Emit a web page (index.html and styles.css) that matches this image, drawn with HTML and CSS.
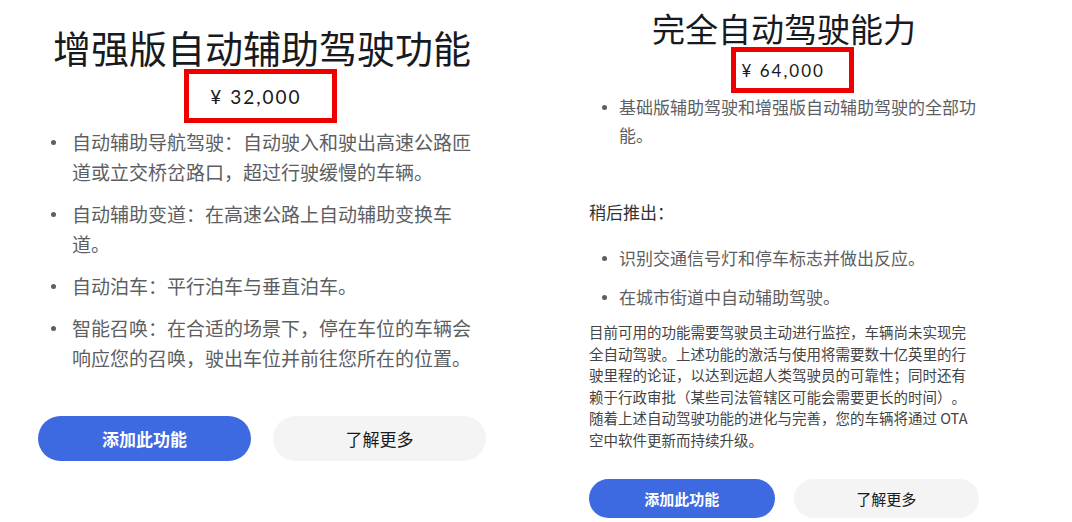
FILE: index.html
```html
<!DOCTYPE html>
<html lang="zh-CN">
<head>
    <meta charset="UTF-8">
    <meta name="viewport" content="width=device-width, initial-scale=1.0">
    <link rel="stylesheet" href="styles.css">
</head>
<body>
    <div class="panel panel-eap">
        <h2 class="panel-title">增强版自动辅助驾驶功能</h2>
        <div class="price-box"><span class="price">¥ 32,000</span></div>
        <ul class="features">
            <li>自动辅助导航驾驶：自动驶入和驶出高速公路匝道或立交桥岔路口，超过行驶缓慢的车辆。</li>
            <li>自动辅助变道：在高速公路上自动辅助变换车道。</li>
            <li>自动泊车：平行泊车与垂直泊车。</li>
            <li>智能召唤：在合适的场景下，停在车位的车辆会响应您的召唤，驶出车位并前往您所在的位置。</li>
        </ul>
        <div class="actions">
            <button class="btn btn-primary">添加此功能</button>
            <button class="btn btn-secondary">了解更多</button>
        </div>
    </div>

    <div class="panel panel-fsd">
        <h2 class="panel-title">完全自动驾驶能力</h2>
        <div class="price-box"><span class="price">¥ 64,000</span></div>
        <ul class="features">
            <li>基础版辅助驾驶和增强版自动辅助驾驶的全部功能。</li>
        </ul>
        <p class="coming-label">稍后推出：</p>
        <ul class="features features-later">
            <li>识别交通信号灯和停车标志并做出反应。</li>
            <li>在城市街道中自动辅助驾驶。</li>
        </ul>
        <p class="disclaimer">目前可用的功能需要驾驶员主动进行监控，车辆尚未实现完全自动驾驶。上述功能的激活与使用将需要数十亿英里的行驶里程的论证，以达到远超人类驾驶员的可靠性；同时还有赖于行政审批（某些司法管辖区可能会需要更长的时间）。随着上述自动驾驶功能的进化与完善，您的车辆将通过 OTA 空中软件更新而持续升级。</p>
        <div class="actions">
            <button class="btn btn-primary">添加此功能</button>
            <button class="btn btn-secondary">了解更多</button>
        </div>
    </div>
</body>
</html>
```

FILE: styles.css
```css
body {
    margin: 0;
    display: flex;
    align-items: flex-start;
    background-color: #fff;
    font-family: "Noto Sans CJK SC", sans-serif;
    color: #171a20;
    text-spacing-trim: space-all;
}

.panel {
    display: flex;
    flex-direction: column;
}

.panel-title {
    margin: 0;
    font-weight: 400;
    text-align: center;
    color: #171a20;
}

.price-box {
    align-self: center;
    display: flex;
    align-items: center;
    border: 5px solid #ee0000;
}

.price {
    font-family: "Lato", "Noto Sans CJK SC", sans-serif;
    color: #171a20;
    letter-spacing: 2px;
}

.features {
    list-style: none;
    margin: 0;
    padding: 0;
    color: #5c5e62;
}

.features li {
    display: grid;
}

.features li::before {
    content: "";
    width: 5px;
    height: 5px;
    border-radius: 50%;
    background-color: #5c5e62;
}

.actions {
    display: grid;
    grid-template-columns: 1fr 1fr;
}

.btn {
    border: none;
    font-family: "Noto Sans CJK SC", sans-serif;
    cursor: pointer;
    padding: 0;
}

.btn-primary {
    background-color: #3e6ae1;
    color: #fff;
    font-weight: 700;
}

.btn-secondary {
    background-color: #f4f4f4;
    color: #171a20;
}

/* left card */
.panel-eap {
    width: 448px;
    margin-left: 38px;
}

.panel-eap .panel-title {
    margin-top: 25px;
    font-size: 38px;
    line-height: 44px;
}

.panel-eap .price-box {
    width: 135px;
    height: 44px;
    justify-content: center;
    padding-right: 8px;
    margin-left: -4px;
}

.panel-eap .price {
    font-size: 19px;
}

.panel-eap .features {
    margin-top: 4px;
    font-size: 19px;
    line-height: 30px;
}

.panel-eap .features li {
    grid-template-columns: 34px 1fr;
    margin-bottom: 12px;
}

.panel-eap .features li::before {
    margin: 13px 0 0 13px;
}

.panel-eap .actions {
    margin-top: 31px;
    column-gap: 22px;
}

.panel-eap .btn {
    height: 45px;
    border-radius: 23px;
    font-size: 17px;
}

/* right card */
.panel-fsd {
    width: 390px;
    margin-left: 103px;
}

.panel-fsd .panel-title {
    margin-top: 9px;
    font-size: 33px;
    line-height: 38px;
}

.panel-fsd .price-box {
    width: 107px;
    height: 36px;
    padding-left: 6px;
    margin-left: 16px;
}

.panel-fsd .price {
    font-size: 17px;
}

.panel-fsd .features {
    font-size: 17px;
    line-height: 28px;
}

.panel-fsd .features li {
    grid-template-columns: 30px 1fr;
}

.panel-fsd .features li::before {
    margin: 12px 0 0 13px;
}

.features-later li + li {
    margin-top: 11px;
}

.coming-label {
    margin: 49px 0 18px;
    font-size: 17px;
    line-height: 28px;
    color: #333;
}

.disclaimer {
    margin: 10px 0 0;
    font-size: 14.5px;
    line-height: 21.5px;
    color: #444;
}

.panel-fsd .actions {
    margin-top: 29px;
    column-gap: 19px;
}

.panel-fsd .btn {
    height: 39px;
    border-radius: 20px;
    font-size: 15px;
}
```
